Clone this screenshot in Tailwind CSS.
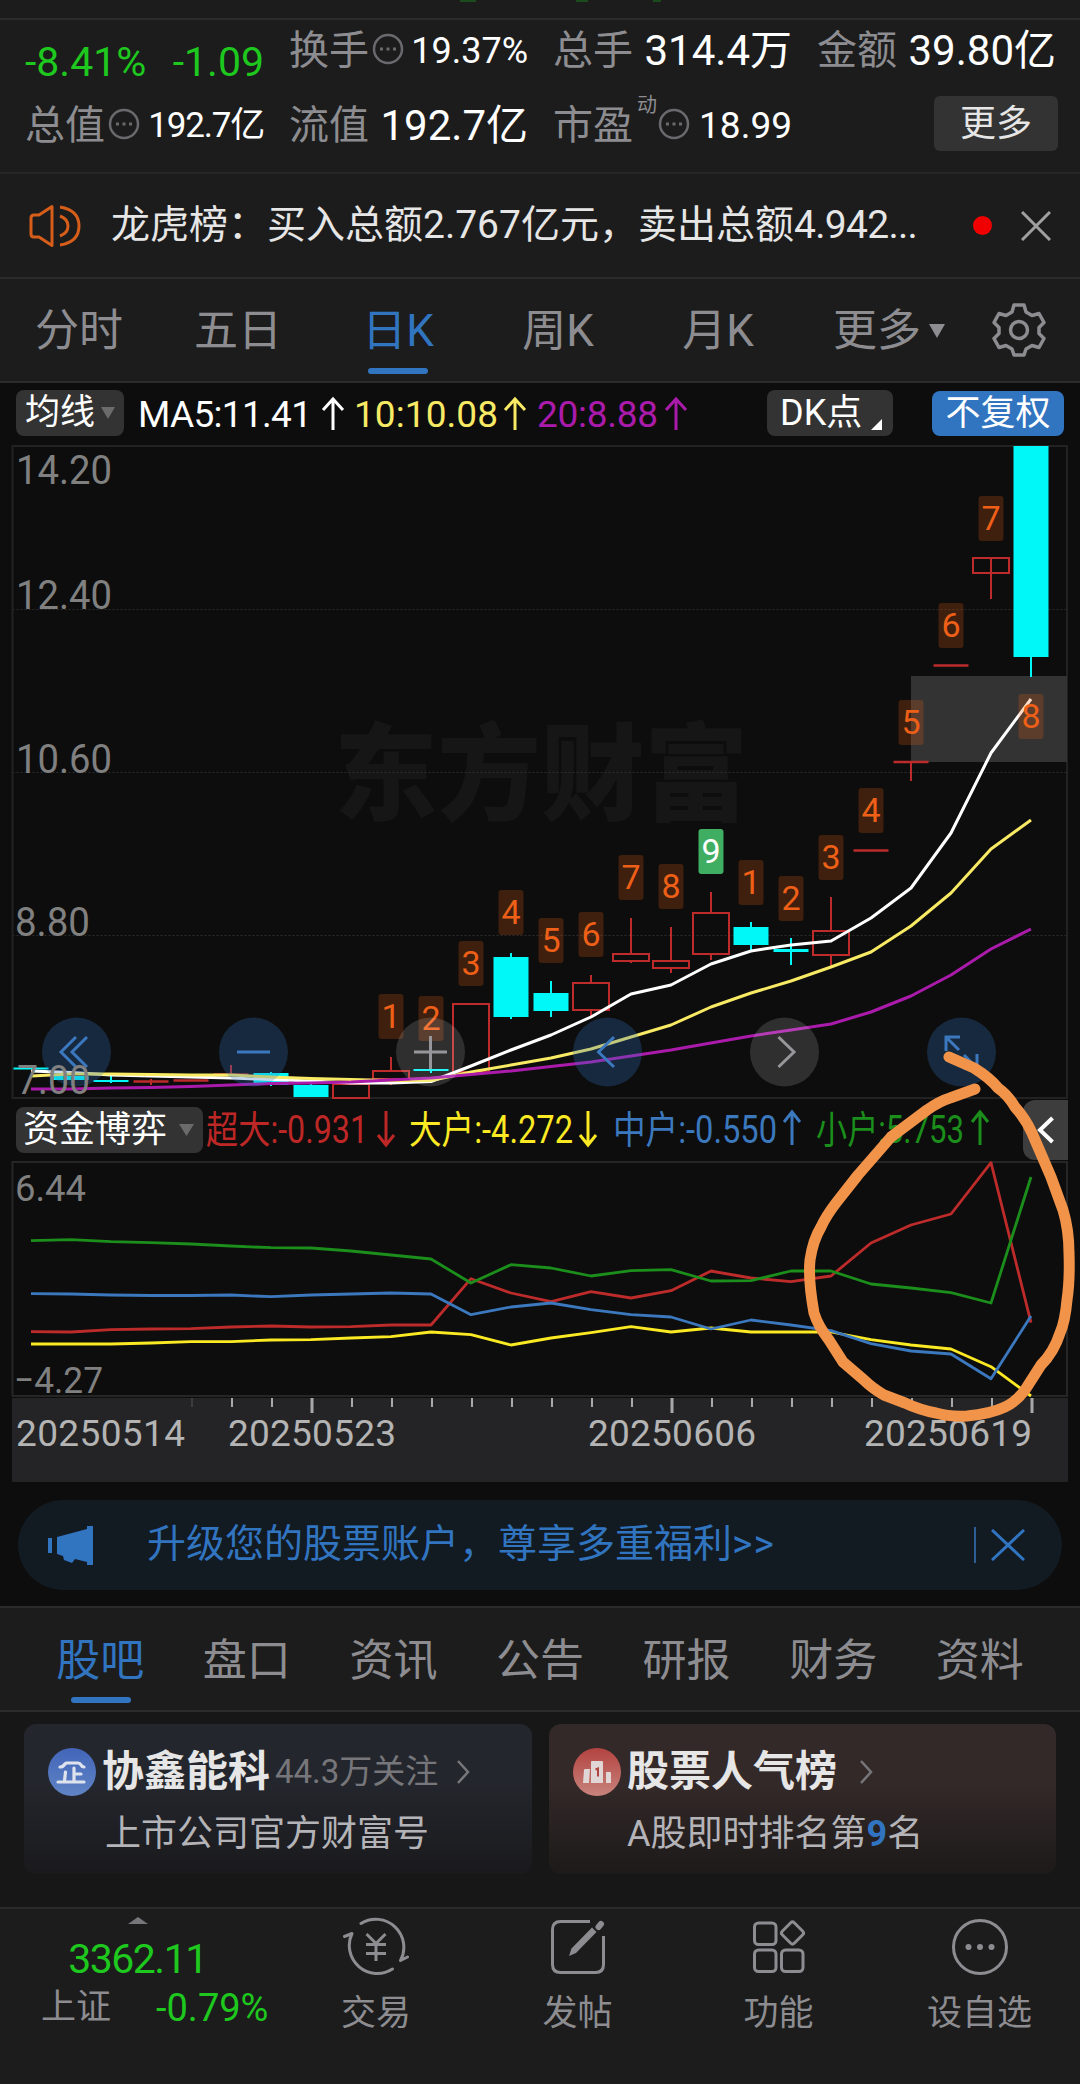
<!DOCTYPE html>
<html lang="zh-CN">
<head>
  <meta charset="UTF-8" />
  <meta name="viewport" content="width=device-width, initial-scale=1.0" />
  <title>协鑫能科 - 日K</title>
  <script src="https://cdn.jsdelivr.net/npm/@tailwindcss/browser@4"></script>
</head>
<body class="bg-[#0d0d0d]">
<div class="relative w-[1080px] h-[2084px] overflow-hidden flex flex-col bg-[#0d0d0d] text-[#8d8d91] font-['Roboto','Noto_Sans_CJK_SC',sans-serif] whitespace-nowrap">

  <!-- 顶部残留 -->
  <div class="h-5 shrink-0 bg-[#1c1c1c] border-b-2 border-[#2b2b2b] flex items-start pl-[460px] gap-[100px]">
    <i class="w-4 h-[2px] bg-[#1b4a1b]"></i>
    <i class="w-3 h-[2px] bg-[#1b4a1b]"></i>
    <i class="-ml-[35px] w-2 h-[2px] bg-[#1b4a1b]"></i>
  </div>

  <!-- 行情摘要 -->
  <section class="h-[154px] shrink-0 bg-[#1c1c1c] border-b-2 border-[#262626] px-[25px] pt-[6px]">
    <div class="grid grid-cols-[239px_239px_239px_239px] gap-x-[25px] text-[40px]">
      <div class="h-[50px] flex justify-between text-[41px] leading-[50px] text-[#1ec81e] pt-[11px]"><span>-8.41%</span><span>-1.09</span></div>
      <div class="h-[50px] flex items-center leading-[50px]">
        <span>换手</span>
        <svg class="ml-[3px] mb-[5px] w-8 h-8" viewBox="0 0 32 32" fill="none" stroke="#6a6a6e" stroke-width="2.500"><circle cx="16" cy="16" r="14" /><path d="M8 16h3M14.500 16h3M21 16h3" stroke-width="3" /></svg>
        <span class="ml-auto text-[36px] text-white">19.37%</span>
      </div>
      <div class="h-[50px] flex items-center justify-between leading-[50px]"><span>总手</span><span class="text-[42px] text-white">314.4万</span></div>
      <div class="h-[50px] flex items-center justify-between leading-[50px]"><span>金额</span><span class="text-[42px] text-white">39.80亿</span></div>
    </div>
    <div class="mt-[25px] grid grid-cols-[239px_239px_239px_239px] gap-x-[25px] text-[40px]">
      <div class="h-[50px] flex items-center leading-[50px]">
        <span>总值</span>
        <svg class="ml-[3px] mb-[5px] w-8 h-8" viewBox="0 0 32 32" fill="none" stroke="#6a6a6e" stroke-width="2.500"><circle cx="16" cy="16" r="14" /><path d="M8 16h3M14.500 16h3M21 16h3" stroke-width="3" /></svg>
        <span class="ml-auto text-[35px] tracking-[-1.2px] text-white">192.7亿</span>
      </div>
      <div class="h-[50px] flex items-center justify-between leading-[50px]"><span>流值</span><span class="text-[42px] text-white">192.7亿</span></div>
      <div class="h-[50px] flex items-center leading-[50px]">
        <span>市盈</span><span class="text-[20px] self-start leading-6 ml-[4px] -mt-2">动</span>
        <svg class="ml-px mb-[5px] w-8 h-8" viewBox="0 0 32 32" fill="none" stroke="#6a6a6e" stroke-width="2.500"><circle cx="16" cy="16" r="14" /><path d="M8 16h3M14.500 16h3M21 16h3" stroke-width="3" /></svg>
        <span class="ml-auto text-[37px] text-white">18.99</span>
      </div>
      <button class="ml-auto -mr-[2px] -mt-[5px] w-[124px] h-[55px] rounded-md bg-[#333333] text-[#e6e6e6] text-[36px] leading-[50px]">更多</button>
    </div>
  </section>

  <!-- 龙虎榜公告 -->
  <section class="h-[105px] shrink-0 bg-[#1c1c1c] border-b-2 border-[#2b2b2b] flex items-center pl-[29px] pr-[29px]">
    <svg class="w-[52px] h-[44px]" viewBox="0 0 52 44" fill="none" stroke="#d65d1a" stroke-width="3"><path d="M23 2.500v39L10 33H5q-3 0-3-3V14q0-3 3-3h5z" stroke-linejoin="round" /><path d="M31 12q8 3 8 10t-8 10M31 3q19 3 19 19T31 41" /></svg>
    <span class="ml-[30px] -mt-[2px] text-[39px] leading-[50px] text-[#e6e6e6]">龙虎榜：买入总额2.767亿元，卖出总额<span class="tracking-[-0.7px]">4.942...</span></span>
    <i class="ml-auto w-[19px] h-[19px] rounded-full bg-[#f00000]"></i>
    <svg class="ml-[29px] w-[30px] h-[30px]" viewBox="0 0 30 30" stroke="#a0a0a0" stroke-width="3"><path d="M1 1l28 28M29 1L1 29" /></svg>
  </section>

  <!-- 周期切换 -->
  <nav class="h-[104px] shrink-0 bg-[#1c1c1c] border-b-2 border-[#2b2b2b] flex items-center text-[44px] leading-[50px]">
    <span class="w-[158px] text-center pt-[2px]">分时</span>
    <span class="w-[160px] text-center pt-[2px]">五日</span>
    <span class="w-[160px] text-center pt-[2px] text-[#3174c0] relative">日K<i class="absolute left-[50px] top-[64px] w-[60px] h-[6px] rounded-full bg-[#3174c0]"></i></span>
    <span class="w-[160px] text-center pt-[2px]">周K</span>
    <span class="w-[160px] text-center pt-[2px]">月K</span>
    <span class="w-[182px] pt-[2px] flex items-center justify-center gap-2">更多<svg class="w-4 h-[14px]" viewBox="0 0 16 14" fill="#8d8d91"><path d="M0 0h16L8 14z" /></svg></span>
    <svg class="ml-[12px] w-[54px] h-[54px]" viewBox="0 0 54 54" fill="none" stroke="#8d8d91" stroke-width="3.500" stroke-linejoin="round"><path d="M22 2h10l2 7 6 3.500 7-2 5 9-5 5v6l5 5-5 9-7-2-6 3.500-2 6H22l-2-6-6-3.500-7 2-5-9 5-5v-6l-5-5 5-9 7 2L20 9z" /><circle cx="27" cy="27" r="8.500" /></svg>
  </nav>

  <!-- 均线指标栏 -->
  <div class="h-[62px] shrink-0 flex items-center px-4 pb-[2px] text-[37px] leading-[46px]">
    <button class="w-[108px] h-[46px] rounded-lg bg-[#333333] flex items-center pl-[9px] text-[35px] text-white">均线<svg class="ml-[6px] w-[14px] h-3" viewBox="0 0 14 12" fill="#6b6b6b"><path d="M0 0h14L7 12z" /></svg></button>
    <svg class="w-[570px] h-[46px] ml-[13px] text-[37px]" viewBox="136 0 570 46">
      <g stroke-width="3" fill="none">
        <path d="M332 40V9M322 20l10-11 10 11" stroke="#fff" />
        <path d="M514 40V9M504 20l10-11 10 11" stroke="#f8ea64" />
        <path d="M675 40V9M665 20l10-11 10 11" stroke="#ab1bab" />
      </g>
      <text x="137" y="37" fill="#fff" textLength="174">MA5:11.41</text>
      <text x="353" y="37" fill="#f8ea64" textLength="144">10:10.08</text>
      <text x="536" y="37" fill="#ab1bab" textLength="121">20:8.88</text>
    </svg>
    <button class="ml-[60px] w-[126px] h-[46px] rounded-lg bg-[#333333] text-white text-[36px] flex items-center pl-[13px]">DK点<svg class="ml-[9px] mt-[22px] w-[11px] h-[11px]" viewBox="0 0 11 11" fill="#fff"><path d="M11 0v11H0z" /></svg></button>
    <button class="ml-[39px] w-[132px] h-[45px] rounded-lg bg-[#3174c0] text-white text-[35px]">不复权</button>
  </div>

  <!-- K线图 -->
  <svg class="shrink-0 w-[1080px] h-[654px]" viewBox="0 445 1080 654">
    <text x="334" y="812" font-size="106" font-weight="900" fill="#161616" textLength="414" lengthAdjust="spacingAndGlyphs">东方财富</text>
    <path d="M12.500 609.500H1067M12.500 772.500H1067M12.500 935.500H1067" stroke="#2c2c2c" stroke-dasharray="2 2" />
    <rect x="12.500" y="446" width="1054.500" height="652" fill="none" stroke="#222" stroke-width="2" />
    <rect x="911" y="676" width="156" height="86" fill="#333" />
    <g id="candles"></g>
    <g id="maLines" fill="none" stroke-width="3" stroke-linejoin="round"></g>
    <g id="marks" font-size="34" text-anchor="middle"></g>
    <g fill="none" stroke-width="3">
      <g fill="#3174c0" fill-opacity=".28" stroke="none">
        <circle cx="76.500" cy="1052" r="34.500" /><circle cx="253.500" cy="1052" r="34.500" /><circle cx="607.500" cy="1052" r="34.500" /><circle cx="961.500" cy="1052" r="34.500" />
      </g>
      <g fill="#fff" fill-opacity=".14" stroke="none"><circle cx="430.500" cy="1052" r="34.500" /><circle cx="784.500" cy="1052" r="34.500" /></g>
      <path d="M76 1037l-15 15 15 15M87 1037l-15 15 15 15M237 1052h33M614 1037l-15.500 15 15.500 15M946 1051v-14h14M946 1037l13 13M977 1054v14h-14M977 1068l-13-13" stroke="#3b78be" />
      <path d="M414 1052h33M430.500 1036v33M778.500 1037l15.500 15-15.500 15" stroke="#97979b" />
    </g>
    <g font-size="41" fill="#808080">
      <text x="16" y="484" textLength="96" lengthAdjust="spacingAndGlyphs">14.20</text>
      <text x="16" y="609" textLength="96" lengthAdjust="spacingAndGlyphs">12.40</text>
      <text x="16" y="773" textLength="96" lengthAdjust="spacingAndGlyphs">10.60</text>
      <text x="15" y="936" textLength="75" lengthAdjust="spacingAndGlyphs">8.80</text>
      <text x="17" y="1094" textLength="73" lengthAdjust="spacingAndGlyphs">7.00</text>
    </g>
  </svg>

  <!-- 资金博弈指标栏 -->
  <div class="h-[62px] shrink-0 flex items-center pl-4 pr-3">
    <button class="w-[187px] h-[46px] rounded-lg bg-[#333333] text-white text-[36px] leading-[44px] flex items-center pl-[7px]">资金博弈<svg class="ml-[12px] w-[15px] h-3" viewBox="0 0 15 12" fill="#6b6b6b"><path d="M0 0h15L7.500 12z" /></svg></button>
    <svg class="w-[800px] h-[46px] text-[38px]" viewBox="203 0 800 46">
      <g stroke-width="3" fill="none">
        <path d="M386 4v34M378 28l8 10 8-10" stroke="#bd2726" />
        <path d="M588 4v34M580 28l8 10 8-10" stroke="#fbea23" />
        <path d="M792 38V5M784 15l8-10 8 10" stroke="#3b78be" />
        <path d="M980 38V5M972 15l8-10 8 10" stroke="#1b8e1b" />
      </g>
      <text x="206" y="36" fill="#bd2726" textLength="162" lengthAdjust="spacingAndGlyphs">超大:-0.931</text>
      <text x="409" y="36" fill="#fbea23" textLength="164" lengthAdjust="spacingAndGlyphs">大户:-4.272</text>
      <text x="613" y="36" fill="#3b78be" textLength="164" lengthAdjust="spacingAndGlyphs">中户:-0.550</text>
      <text x="816" y="36" fill="#1b8e1b" textLength="148" lengthAdjust="spacingAndGlyphs">小户:5.753</text>
    </svg>
    <span class="ml-auto w-[45px] h-[60px] rounded-l-xl bg-[#3d3d3d] flex items-center justify-center"><svg class="w-[17px] h-7" viewBox="0 0 17 28" fill="none" stroke="#fff" stroke-width="4"><path d="M15.500 2L3 14l12.500 12" /></svg></span>
  </div>

  <!-- 资金博弈图 -->
  <svg class="shrink-0 w-[1080px] h-[237px]" viewBox="0 1161 1080 237">
    <rect x="12.500" y="1162" width="1054.500" height="234" fill="none" stroke="#262626" stroke-width="2" />
    <g id="fundLines" fill="none" stroke-width="2.800" stroke-linejoin="round"></g>
    <g font-size="37" fill="#808080">
      <text x="15" y="1201" textLength="71" lengthAdjust="spacingAndGlyphs">6.44</text>
      <text x="14" y="1393" textLength="89" lengthAdjust="spacingAndGlyphs">−4.27</text>
    </g>
  </svg>

  <!-- 日期轴 -->
  <svg class="shrink-0 w-[1080px] h-[84px]" viewBox="0 1398 1080 84">
    <rect x="12" y="1398" width="1056" height="84" fill="#242426" />
    <g id="ticks"></g>
    <g font-size="37" fill="#b4b4b4">
      <text x="16" y="1446" textLength="169">20250514</text>
      <text x="228" y="1446" textLength="168">20250523</text>
      <text x="588" y="1446" textLength="168">20250606</text>
      <text x="864" y="1446" textLength="168">20250619</text>
    </g>
  </svg>

  <!-- 升级提示 -->
  <div class="mt-[18px] mx-[18px] h-[90px] shrink-0 rounded-full bg-[#121a22] flex items-center pl-[30px] pr-[37px] text-[#3174c0]">
    <svg class="w-[45px] h-[39px]" viewBox="0 0 45 39" fill="#3174c0"><path d="M0 12h4v15H0zM9 11L39 3V0h6v39h-6v-3l-12-3-3 4-8-3-1-4-6-2z" /></svg>
    <span class="ml-[54px] -mt-[2px] text-[39px] leading-[50px]">升级您的股票账户，尊享多重福利<span class="tracking-[1px]">&gt;&gt;</span></span>
    <i class="ml-auto w-[2px] h-9 bg-[#2d5e96]"></i>
    <svg class="ml-[15px] w-[34px] h-[32px]" viewBox="0 0 34 32" stroke="#3174c0" stroke-width="3"><path d="M1 1l32 30M33 1L1 31" /></svg>
  </div>

  <!-- 资讯分类 -->
  <nav class="mt-[16px] h-[106px] shrink-0 bg-[#1c1c1c] border-y-2 border-[#2b2b2b] flex items-center px-[27px] text-[44px] leading-[50px] text-center">
    <span class="flex-1 pt-[4px] text-[#3174c0] relative">股吧<i class="absolute left-[44px] top-[65px] w-[60px] h-[6px] rounded-full bg-[#3174c0]"></i></span>
    <span class="flex-1 pt-[4px]">盘口</span>
    <span class="flex-1 pt-[4px]">资讯</span>
    <span class="flex-1 pt-[4px]">公告</span>
    <span class="flex-1 pt-[4px]">研报</span>
    <span class="flex-1 pt-[4px]">财务</span>
    <span class="flex-1 pt-[4px]">资料</span>
  </nav>

  <!-- 卡片 -->
  <section class="h-[195px] shrink-0 bg-[#171717] pt-[12px] px-6 flex gap-[17px]">
    <div class="w-[508px] h-[150px] rounded-xl bg-linear-to-b from-[#24262d] from-40% to-[#1a1a1d] px-6 pt-[22px]">
      <div class="flex items-center h-[52px]">
        <svg class="w-12 h-12" viewBox="0 0 48 48"><defs><linearGradient id="gb" x2="0" y2="1"><stop stop-color="#4265b9" /><stop offset="1" stop-color="#6084c4" /></linearGradient></defs><circle cx="24" cy="24" r="24" fill="url(#gb)" /><path d="M12 19q3 0 4-2l1-1q1-1 2-1h11q2 0 3 2 1 2 3 2M26 20v13M26 26h7M17.500 24l-1 9M10 34h26" fill="none" stroke="#dfe3ee" stroke-width="3.200" stroke-linecap="round" /></svg>
        <span class="ml-[6px] text-[42px] leading-[50px] font-bold text-[#e6e6e6]">协鑫能科</span>
        <span class="ml-[5px] text-[33px] leading-[50px] text-[#77777b]">44.3万关注</span>
        <svg class="ml-[19px] w-[13px] h-6" viewBox="0 0 13 24" fill="none" stroke="#77777b" stroke-width="2.500"><path d="M1 1l10 11L1 23" /></svg>
      </div>
      <p class="mt-[11px] ml-[57px] text-[36px] leading-[50px] text-[#b4b4b8]">上市公司官方财富号</p>
    </div>
    <div class="w-[507px] h-[150px] rounded-xl bg-linear-to-b from-[#332928] from-40% to-[#1d1a1a] px-6 pt-[22px]">
      <div class="flex items-center h-[52px]">
        <svg class="w-12 h-12" viewBox="0 0 48 48"><defs><linearGradient id="gr" x2="0" y2="1"><stop stop-color="#b34340" /><stop offset="1" stop-color="#c8837d" /></linearGradient></defs><circle cx="24" cy="24" r="24" fill="url(#gr)" /><path d="M11 22q0-1 1-1h5l-1 14h-6zM18 14q0-1 1-1h10q1 0 1 1v21H18zM33 24h4q1 0 1 1v10h-5z" fill="#e0d6d5" /><path d="M22.500 21.500l2.500-1v8" fill="none" stroke="#b34340" stroke-width="2" /></svg>
        <span class="ml-[6px] text-[42px] leading-[50px] font-bold text-[#e6e6e6]">股票人气榜</span>
        <svg class="ml-[23px] w-[13px] h-6" viewBox="0 0 13 24" fill="none" stroke="#77777b" stroke-width="2.500"><path d="M1 1l10 11L1 23" /></svg>
      </div>
      <p class="mt-[11px] ml-[54px] text-[36px] leading-[50px] text-[#b4b4b8]">A股即时排名第<b class="text-[#3174c0]">9</b>名</p>
    </div>
  </section>

  <!-- 底部导航 -->
  <footer class="h-[177px] shrink-0 bg-[#1c1c1c] border-t-2 border-[#2b2b2b] flex text-[35px] leading-[40px]">
    <div class="w-[275px] flex flex-col items-center pt-[8px]">
      <svg class="w-5 h-[7px]" viewBox="0 0 20 7" fill="#77777b"><path d="M10 0l10 7H0z" /></svg>
      <span class="mt-[12px] text-[41px] leading-[46px] tracking-[-1.500px] text-[#1ec81e]">3362.11</span>
      <div class="mt-[6px] w-full flex items-center pl-[41px]"><span>上证</span><span class="ml-[45px] text-[38px] text-[#1ec81e]">-0.79%</span></div>
    </div>
    <div class="w-[202px] flex flex-col items-center pt-[8px]">
      <svg class="w-[66px] h-[60px]" viewBox="0 0 66 60" fill="none" stroke="#8d8d91" stroke-width="3" stroke-linecap="round"><path d="M18 6.500A28 28 0 0 1 57.500 43.500L64.500 40M49.500 52A28 28 0 0 1 9 16.500L1.500 19.500" stroke-linejoin="round" /><path d="M23.500 17l9.500 9.500L42.500 17M23 27.500h20M23 36.500h20M33 27v17" stroke-linecap="butt" /></svg>
      <span class="mt-[17px]">交易</span>
    </div>
    <div class="w-[201px] flex flex-col items-center pt-[8px]">
      <svg class="w-[60px] h-[60px]" viewBox="0 0 60 60" fill="none" stroke="#8d8d91" stroke-width="3"><path d="M42 4.500H12.500q-8 0-8 8v35q0 8 8 8h35q8 0 8-8V19" /><path d="M21 39l2.500-7.500L44 10.500l4.500 4.500L28 36z" fill="#8d8d91" stroke="none" /><path d="M50.500 10l2.500-3" stroke-width="6" stroke-linecap="round" /></svg>
      <span class="mt-[17px]">发帖</span>
    </div>
    <div class="w-[201px] flex flex-col items-center pt-[8px]">
      <svg class="w-[60px] h-[60px]" viewBox="0 0 60 60" fill="none" stroke="#8d8d91" stroke-width="3"><rect x="5.500" y="6" width="21.500" height="21.500" rx="4" /><rect x="5.500" y="33" width="21.500" height="21.500" rx="4" /><rect x="32.500" y="33" width="21.500" height="21.500" rx="4" /><rect x="35" y="7.500" width="17" height="17" rx="2.500" transform="rotate(45 43.500 16)" /></svg>
      <span class="mt-[17px]">功能</span>
    </div>
    <div class="w-[201px] flex flex-col items-center pt-[8px]">
      <svg class="w-[60px] h-[60px]" viewBox="0 0 60 60" fill="none" stroke="#8d8d91" stroke-width="3"><circle cx="30" cy="30" r="26.500" /><g fill="#8d8d91" stroke="none"><circle cx="18.500" cy="30" r="3" /><circle cx="30" cy="30" r="3" /><circle cx="41.500" cy="30" r="3" /></g></svg>
      <span class="mt-[17px]">设自选</span>
    </div>
  </footer>

  <!-- 手绘圈注 -->
  <svg class="absolute left-[780px] top-[1030px] w-[300px] h-[410px]" viewBox="780 1030 300 410" fill="none" stroke="#f2934a" stroke-width="11" stroke-linecap="round" stroke-linejoin="round">
    <path d="M949 1057L974 1068Q990 1078 998 1088Q1008 1095 1015 1107Q1025 1118 1032 1133L1051 1177L1063 1210Q1069 1230 1069 1253Q1070 1280 1067 1300Q1065 1322 1060 1333Q1054 1352 1041 1365L1025 1390Q1016 1402 1005 1407Q990 1414 967 1416Q950 1417 936 1413Q920 1410 905 1403L884 1395Q872 1388 864 1380L843 1362L829 1340Q818 1326 814 1313Q808 1280 810 1260Q813 1240 821 1227Q826 1216 836 1203L858 1175L891 1137L927 1110Q940 1101 950 1098L975 1089" />
  </svg>
</div>

<script>
  const px = (i) => 31 + 40 * i;

  // [类型, 实体上, 实体下, 影线上, 影线下]
  const candles = [
    ['d', 1067.5, 1069.5, 0, 0], ['d', 1076, 1080, 0, 0], ['d', 1080, 1082, 1076, 1083], ['l', 1081.5, 1081.5, 1079, 1085],
    ['l', 1080.5, 1080.5, 0, 0], ['l', 1074.5, 1074.5, 1065, 1075], ['d', 1073, 1085, 1072, 1086], ['d', 1085, 1097, 1083, 1097],
    ['u', 1084, 1098, 0, 0], ['u', 1071, 1079, 1057, 1085], ['d', 1069, 1071, 1058, 1073], ['u', 1004, 1072, 0, 0],
    ['d', 957, 1017, 953, 1019], ['d', 993, 1011, 981, 1017], ['u', 983, 1010, 975, 1016], ['u', 954, 961, 918, 963],
    ['u', 961, 968, 927, 973], ['u', 913, 954, 892, 960], ['d', 927, 945, 922, 950], ['d', 949, 952, 938, 965],
    ['u', 931, 955, 897, 966], ['l', 850.5, 850.5, 0, 0], ['l', 762, 762, 762, 781], ['l', 665.5, 665.5, 0, 0],
    ['u', 558, 573, 573, 599], ['d', 446, 657, 657, 677],
  ];
  let html = '';
  candles.forEach(([t, a, b, h, l], i) => {
    const x = px(i);
    const color = t === 'd' ? '#00f8f8' : '#bd2b2b';
    if (t === 'u') {
      if (h) html += `<path d="M${x} ${h}V${a}M${x} ${b}V${l}" stroke="${color}" stroke-width="2"/>`;
      html += `<rect x="${x - 18}" y="${a}" width="36" height="${b - a}" fill="none" stroke="${color}" stroke-width="2"/>`;
    } else {
      if (h) html += `<path d="M${x} ${h}V${l}" stroke="${color}" stroke-width="2"/>`;
      html += t === 'd'
        ? `<rect x="${x - 17.5}" y="${a}" width="35" height="${b - a}" fill="${color}"/>`
        : `<path d="M${x - 17.5} ${a}h35" stroke="${color}" stroke-width="2.5"/>`;
    }
  });
  document.getElementById('candles').innerHTML = html;

  const line = (ys, color) => `<polyline points="${ys.map((y, i) => px(i) + ',' + y).join(' ')}" stroke="${color}"/>`;

  // MA5 / MA10 / MA20
  document.getElementById('maLines').innerHTML =
    line([1071, 1072.5, 1075, 1076, 1077, 1078, 1079.5, 1081, 1083, 1083, 1081.5, 1066, 1050, 1035, 1017, 994, 985, 964, 951, 945, 941, 918, 888, 833, 753, 699], '#ffffff') +
    line([1076, 1074, 1074, 1074.5, 1075, 1075, 1077, 1078.5, 1079.5, 1080.5, 1080.5, 1072, 1065, 1058, 1049, 1037, 1025, 1007, 993, 981, 967, 952, 926, 893, 849, 820], '#f8ea64') +
    line([1089, 1089, 1088, 1087.5, 1086.5, 1085, 1083.5, 1083, 1082, 1080, 1078, 1074.5, 1071, 1066.5, 1062, 1056, 1050, 1043, 1036, 1030, 1024, 1012, 996, 975, 949, 929], '#ab1bab');

  // 超大 / 大户 / 中户 / 小户
  document.getElementById('fundLines').innerHTML =
    line([1331.7, 1332, 1329.7, 1329, 1328.7, 1327, 1326, 1327, 1326.7, 1325, 1325, 1278.7, 1293, 1301.7, 1291.7, 1298, 1290.7, 1271, 1278, 1281.7, 1276, 1243, 1225, 1214, 1162.7, 1322.7], '#bd2b2b') +
    line([1344, 1344, 1344, 1343, 1341.7, 1341.7, 1340, 1339.7, 1338, 1336.7, 1332, 1334.7, 1345, 1338, 1332.7, 1326.7, 1332, 1328, 1332, 1332, 1332, 1339.7, 1345, 1349, 1366.7, 1396], '#fbea23') +
    line([1293.7, 1294, 1295, 1295.5, 1295.5, 1295, 1296.7, 1295, 1294, 1293, 1294, 1314.7, 1307, 1303, 1309.7, 1314.7, 1317, 1329, 1320, 1325, 1330.7, 1343.7, 1351, 1354, 1378.7, 1316], '#3b78be') +
    line([1240.7, 1239.7, 1241.7, 1242.7, 1244, 1246, 1247.7, 1248, 1251, 1255, 1259, 1283, 1264.7, 1268, 1276, 1270.7, 1269.7, 1281, 1280.7, 1271, 1271, 1284, 1288, 1292.7, 1303, 1177], '#1b8e1b');

  // 九转序列
  const marks = [[9, 1, 994], [10, 2, 996], [11, 3, 941], [12, 4, 890], [13, 5, 918], [14, 6, 912], [15, 7, 855], [16, 8, 864], [17, 9, 829],
    [18, 1, 860], [19, 2, 876], [20, 3, 835], [21, 4, 788], [22, 5, 700], [23, 6, 603], [24, 7, 496], [25, 8, 694]];
  document.getElementById('marks').innerHTML = marks.map(([i, n, y]) =>
    `<rect x="${px(i) - 12.5}" y="${y}" width="25" height="45" rx="3" fill="${n === 9 ? '#3fae63' : '#f05f14'}" fill-opacity="${n === 9 ? 1 : 0.22}"/>` +
    `<text x="${px(i)}" y="${y + 34}" fill="${n === 9 ? '#ffffff' : '#ee5f17'}">${n}</text>`).join('');

  let ticks = '';
  for (let i = 4; i < 26; i++) {
    const major = i === 7 || i === 16 || i === 25;
    ticks += `<rect x="${px(i) + (major ? -0.5 : 0)}" y="1398" width="${major ? 3 : 2}" height="${major ? 15 : 9}" fill="${i === 4 ? '#3c3c3e' : '#a8a8a8'}"/>`;
  }
  document.getElementById('ticks').innerHTML = ticks;
</script>
</body>
</html>
